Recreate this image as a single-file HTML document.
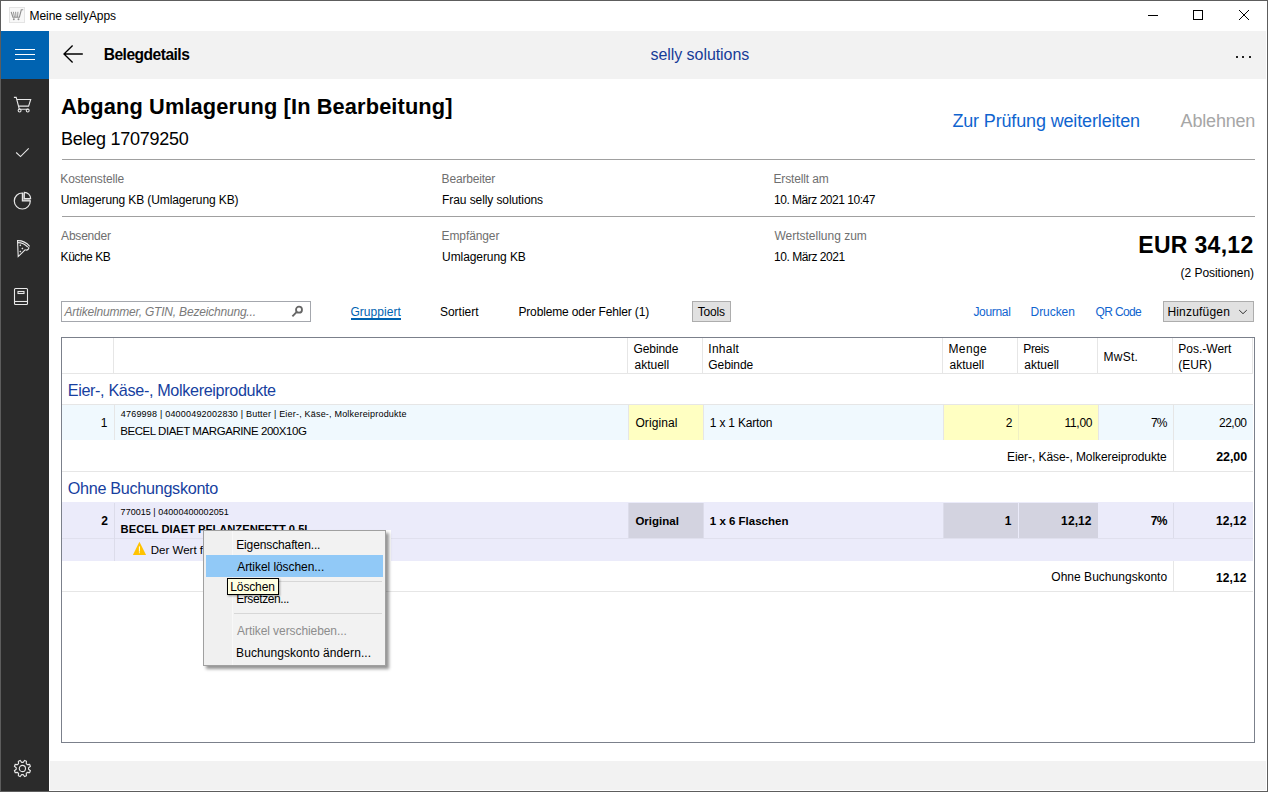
<!DOCTYPE html>
<html><head><meta charset="utf-8"><title>Belegdetails</title>
<style>
html,body{margin:0;padding:0;width:1268px;height:792px;overflow:hidden;background:#fff}
body{position:relative;font-family:"Liberation Sans",sans-serif;color:#000}
.t{position:absolute;white-space:nowrap}
.r{position:absolute}
</style></head><body>
<div class="r" style="left:0px;top:0px;width:1268px;height:792px;background:#5d5d5d;"></div>
<div class="r" style="left:1px;top:1px;width:1266px;height:790px;background:#ffffff;"></div>
<svg class="r" style="left:9px;top:7px" width="16" height="16" viewBox="0 0 16 16">
<rect x="0.5" y="0.5" width="15" height="15" fill="#f8f8f8" stroke="#e4e4e4"/>
<path d="M2.2 4.8 L3.9 10.2 H10.4 L12.3 2.8 H14.2" fill="none" stroke="#8e8e8e" stroke-width="1.1"/>
<path d="M4.4 4.8 L5.4 10 M6.6 4.8 L7 10 M8.9 4.8 L8.6 10" fill="none" stroke="#969696" stroke-width="1"/>
<circle cx="4.8" cy="12.3" r="0.95" fill="#8e8e8e"/><circle cx="9.5" cy="12.3" r="0.95" fill="#8e8e8e"/>
</svg>
<div class="t" style="top:10px;font-size:12px;line-height:12px;letter-spacing:-0.057px;left:29.50px;">Meine sellyApps</div>
<svg class="r" style="left:1140px;top:5px" width="120" height="22" viewBox="0 0 120 22">
<path d="M8 10.5 H18" stroke="#000" stroke-width="1" fill="none"/>
<rect x="53.5" y="5.5" width="9" height="9" stroke="#000" stroke-width="1" fill="none"/>
<path d="M99 5 L109 15 M109 5 L99 15" stroke="#000" stroke-width="1" fill="none"/>
</svg>
<div class="r" style="left:1px;top:31px;width:48px;height:760px;background:#2b2b2b;"></div>
<div class="r" style="left:1px;top:31px;width:48px;height:48px;background:#0063b1;"></div>
<div class="r" style="left:15px;top:49px;width:20px;height:1px;background:#fff;"></div>
<div class="r" style="left:15px;top:54px;width:20px;height:1px;background:#fff;"></div>
<div class="r" style="left:15px;top:59px;width:20px;height:1px;background:#fff;"></div>
<svg class="r" style="left:12px;top:94px" width="22" height="20" viewBox="0 0 22 20">
<path d="M1.9 3.4 H4.2 L7.3 15.2 H16.6" fill="none" stroke="#e8e8e8" stroke-width="1.1"/>
<path d="M4.9 5.5 H18.7 L16.6 12.1 H6.6" fill="none" stroke="#e8e8e8" stroke-width="1.1"/>
<circle cx="7.6" cy="16.5" r="1.45" fill="none" stroke="#e8e8e8" stroke-width="1.1"/><circle cx="15.7" cy="16.5" r="1.45" fill="none" stroke="#e8e8e8" stroke-width="1.1"/>
</svg>
<svg class="r" style="left:14px;top:145px" width="18" height="14" viewBox="0 0 18 14">
<path d="M2.2 7.5 L6.5 11.6 L14.7 3.4" fill="none" stroke="#e8e8e8" stroke-width="1.1"/>
</svg>
<svg class="r" style="left:8px;top:186px" width="30" height="30" viewBox="0 0 30 30">
<path d="M14.4 14.9 V7 H16.3 V12.6 H22.3 V14.9 Z" fill="#8f8f8f"/>
<path d="M14.4 7 A8 8 0 1 0 22.3 14.9 H14.4 Z" fill="none" stroke="#e6e6e6" stroke-width="1.2"/>
<path d="M16.3 6.3 A6.3 6.3 0 0 1 22.6 12.6 H16.3 Z" fill="none" stroke="#e6e6e6" stroke-width="1.2"/>
</svg>
<svg class="r" style="left:8px;top:234px" width="30" height="30" viewBox="0 0 30 30">
<path d="M9 6.6 Q16.5 6.2 21.7 12.3" fill="none" stroke="#e8e8e8" stroke-width="1.1"/>
<path d="M9.8 8.6 Q15.8 8.6 19.8 13.2" fill="none" stroke="#e8e8e8" stroke-width="1.1"/>
<path d="M9.5 6.6 L10.2 22.6 L17.3 15.6" fill="none" stroke="#e8e8e8" stroke-width="1.1"/>
<path d="M17.3 15.6 A2.2 2.2 0 0 0 20.6 12.9" fill="none" stroke="#e8e8e8" stroke-width="1.1"/>
<path d="M12.3 10.3 L13.3 11.3 L12.3 12.3 L11.3 11.3 Z M14.4 13.4 L15.4 14.4 L14.4 15.4 L13.4 14.4 Z M12.3 16.6 L13.3 17.6 L12.3 18.6 L11.3 17.6 Z" fill="#e6e6e6"/>
</svg>
<svg class="r" style="left:12px;top:286px" width="18" height="20" viewBox="0 0 18 20">
<rect x="2.5" y="2.5" width="13" height="16" rx="1" fill="none" stroke="#e8e8e8" stroke-width="1.1"/>
<path d="M2.5 15.5 H15.5" fill="none" stroke="#e8e8e8" stroke-width="1.1"/>
<rect x="6" y="5.5" width="6" height="2" fill="none" stroke="#e8e8e8" stroke-width="1.1"/>
</svg>
<svg class="r" style="left:12px;top:758px" width="22" height="22" viewBox="0 0 22 22">
<path d="M11.13 4.34 L12.65 2.51 L14.46 3.26 L14.24 5.63 L15.27 6.66 L17.64 6.44 L18.39 8.25 L16.56 9.77 L16.56 11.23 L18.39 12.75 L17.64 14.56 L15.27 14.34 L14.24 15.37 L14.46 17.74 L12.65 18.49 L11.13 16.66 L9.67 16.66 L8.15 18.49 L6.34 17.74 L6.56 15.37 L5.53 14.34 L3.16 14.56 L2.41 12.75 L4.24 11.23 L4.24 9.77 L2.41 8.25 L3.16 6.44 L5.53 6.66 L6.56 5.63 L6.34 3.26 L8.15 2.51 L9.67 4.34 Z" fill="none" stroke="#e8e8e8" stroke-width="1.1"/>
<circle cx="10.4" cy="10.5" r="3.1" fill="none" stroke="#e8e8e8" stroke-width="1.1"/>
</svg>
<div class="r" style="left:49px;top:31px;width:1217px;height:48px;background:#f2f2f2;"></div>
<svg class="r" style="left:60px;top:43px" width="26" height="22" viewBox="0 0 26 22">
<path d="M12.6 2.4 L4 11 L12.6 19.6 M4 11 H22.8" fill="none" stroke="#000" stroke-width="1.35"/>
</svg>
<div class="t" style="top:47px;font-size:15.6px;line-height:15.6px;font-weight:bold;letter-spacing:-0.518px;left:103.70px;">Belegdetails</div>
<div class="t" style="top:47px;font-size:16px;line-height:16px;color:#173c98;letter-spacing:-0.057px;left:650.50px;">selly solutions</div>
<div class="r" style="left:1236px;top:56px;width:2px;height:2px;background:#222;"></div>
<div class="r" style="left:1242px;top:56px;width:2px;height:2px;background:#222;"></div>
<div class="r" style="left:1249px;top:56px;width:2px;height:2px;background:#222;"></div>
<div class="r" style="left:50px;top:761px;width:1216px;height:29px;background:#f2f2f2;"></div>
<div class="t" style="top:96px;font-size:21.8px;line-height:21.8px;font-weight:bold;letter-spacing:0.121px;left:61.00px;">Abgang Umlagerung [In Bearbeitung]</div>
<div class="t" style="top:130px;font-size:18px;line-height:18px;letter-spacing:-0.254px;left:61.00px;">Beleg 17079250</div>
<div class="r" style="left:62px;top:159px;width:1193px;height:1px;background:#a0a0a0;"></div>
<div class="t" style="top:112px;font-size:18px;line-height:18px;color:#0f64cf;letter-spacing:-0.148px;left:952.40px;">Zur Prüfung weiterleiten</div>
<div class="t" style="top:112px;font-size:18px;line-height:18px;color:#a6a6a6;letter-spacing:-0.186px;left:1180.60px;">Ablehnen</div>
<div class="t" style="top:173px;font-size:12px;line-height:12px;color:#6f6f6f;letter-spacing:-0.136px;left:60.30px;">Kostenstelle</div>
<div class="t" style="top:194px;font-size:12px;line-height:12px;letter-spacing:-0.107px;left:60.80px;">Umlagerung KB (Umlagerung KB)</div>
<div class="t" style="top:173px;font-size:12px;line-height:12px;color:#6f6f6f;letter-spacing:-0.189px;left:441.60px;">Bearbeiter</div>
<div class="t" style="top:194px;font-size:12px;line-height:12px;letter-spacing:-0.089px;left:442.10px;">Frau selly solutions</div>
<div class="t" style="top:173px;font-size:12px;line-height:12px;color:#6f6f6f;letter-spacing:-0.140px;left:773.50px;">Erstellt am</div>
<div class="t" style="top:194px;font-size:12px;line-height:12px;letter-spacing:-0.483px;left:774.00px;">10. März 2021 10:47</div>
<div class="r" style="left:62px;top:216px;width:1193px;height:1px;background:#a0a0a0;"></div>
<div class="t" style="top:230px;font-size:12px;line-height:12px;color:#6f6f6f;letter-spacing:-0.214px;left:61.10px;">Absender</div>
<div class="t" style="top:251px;font-size:12px;line-height:12px;letter-spacing:-0.457px;left:60.60px;">Küche KB</div>
<div class="t" style="top:230px;font-size:12px;line-height:12px;color:#6f6f6f;letter-spacing:-0.112px;left:441.60px;">Empfänger</div>
<div class="t" style="top:251px;font-size:12px;line-height:12px;letter-spacing:-0.083px;left:442.10px;">Umlagerung KB</div>
<div class="t" style="top:230px;font-size:12px;line-height:12px;color:#6f6f6f;letter-spacing:-0.013px;left:774.50px;">Wertstellung zum</div>
<div class="t" style="top:251px;font-size:12px;line-height:12px;letter-spacing:-0.467px;left:774.00px;">10. März 2021</div>
<div class="t" style="top:234px;font-size:23px;line-height:23px;font-weight:bold;letter-spacing:0.300px;right:14.48px;">EUR 34,12</div>
<div class="t" style="top:267px;font-size:12px;line-height:12px;letter-spacing:-0.046px;right:14.00px;">(2 Positionen)</div>
<div class="r" style="left:61px;top:301px;width:250px;height:21px;background:#fff;box-sizing:border-box;border:1px solid #a4a7ad;"></div>
<div class="t" style="top:306px;font-size:12px;line-height:12px;color:#7a7a7a;font-style:italic;letter-spacing:-0.194px;left:64.50px;">Artikelnummer, GTIN, Bezeichnung...</div>
<svg class="r" style="left:289px;top:304px" width="16" height="16" viewBox="0 0 16 16">
<circle cx="10" cy="5.7" r="3.0" fill="none" stroke="#666" stroke-width="1.8"/>
<path d="M7.8 7.9 L3.4 12.4" stroke="#666" stroke-width="1.9"/>
</svg>
<div class="t" style="top:306px;font-size:12px;line-height:12px;color:#0063b1;letter-spacing:0.050px;left:350.40px;">Gruppiert</div>
<div class="r" style="left:351px;top:318px;width:50px;height:2px;background:#0063b1;"></div>
<div class="t" style="top:306px;font-size:12px;line-height:12px;letter-spacing:-0.029px;left:440.00px;">Sortiert</div>
<div class="t" style="top:306px;font-size:12px;line-height:12px;letter-spacing:-0.139px;left:518.40px;">Probleme oder Fehler (1)</div>
<div class="r" style="left:692px;top:301px;width:39px;height:21px;background:#e1e1e1;box-sizing:border-box;border:1px solid #adadad;"></div>
<div class="t" style="top:306px;font-size:12px;line-height:12px;letter-spacing:-0.175px;left:697.70px;">Tools</div>
<div class="t" style="top:306px;font-size:12px;line-height:12px;color:#0f64cf;letter-spacing:-0.317px;left:973.40px;">Journal</div>
<div class="t" style="top:306px;font-size:12px;line-height:12px;color:#0f64cf;letter-spacing:-0.067px;left:1030.60px;">Drucken</div>
<div class="t" style="top:306px;font-size:12px;line-height:12px;color:#0f64cf;letter-spacing:-0.633px;left:1095.50px;">QR Code</div>
<div class="r" style="left:1163px;top:301px;width:91px;height:21px;background:#e1e1e1;box-sizing:border-box;border:1px solid #adadad;"></div>
<div class="t" style="top:306px;font-size:12px;line-height:12px;letter-spacing:0.189px;left:1167.40px;">Hinzufügen</div>
<svg class="r" style="left:1238px;top:308px" width="10" height="8" viewBox="0 0 10 8">
<path d="M1.2 2.1 L5 5.7 L8.8 2.1" fill="none" stroke="#2a2a2a" stroke-width="0.95"/>
</svg>
<div class="r" style="left:61px;top:337px;width:1194px;height:406px;background:#fff;box-sizing:border-box;border:1px solid #7b808b;"></div>
<div class="r" style="left:62px;top:373px;width:1191px;height:1px;background:#e6e6e6;"></div>
<div class="r" style="left:113px;top:338px;width:1px;height:35px;background:#e6e6e6;"></div>
<div class="r" style="left:627px;top:338px;width:1px;height:35px;background:#e6e6e6;"></div>
<div class="r" style="left:702px;top:338px;width:1px;height:35px;background:#e6e6e6;"></div>
<div class="r" style="left:942px;top:338px;width:1px;height:35px;background:#e6e6e6;"></div>
<div class="r" style="left:1017px;top:338px;width:1px;height:35px;background:#e6e6e6;"></div>
<div class="r" style="left:1097px;top:338px;width:1px;height:35px;background:#e6e6e6;"></div>
<div class="r" style="left:1172px;top:338px;width:1px;height:35px;background:#e6e6e6;"></div>
<div class="r" style="left:1252px;top:338px;width:1px;height:35px;background:#e6e6e6;"></div>
<div class="t" style="top:343px;font-size:12px;line-height:12px;letter-spacing:-0.083px;left:633.50px;">Gebinde</div>
<div class="t" style="top:359px;font-size:12px;line-height:12px;left:634.50px;">aktuell</div>
<div class="t" style="top:343px;font-size:12px;line-height:12px;letter-spacing:0.260px;left:708.30px;">Inhalt</div>
<div class="t" style="top:359px;font-size:12px;line-height:12px;letter-spacing:-0.083px;left:708.30px;">Gebinde</div>
<div class="t" style="top:343px;font-size:12px;line-height:12px;letter-spacing:0.375px;left:948.50px;">Menge</div>
<div class="t" style="top:359px;font-size:12px;line-height:12px;left:949.50px;">aktuell</div>
<div class="t" style="top:343px;font-size:12px;line-height:12px;letter-spacing:-0.375px;left:1023.30px;">Preis</div>
<div class="t" style="top:359px;font-size:12px;line-height:12px;left:1024.30px;">aktuell</div>
<div class="t" style="top:343px;font-size:12px;line-height:12px;left:1178.30px;">Pos.-Wert</div>
<div class="t" style="top:359px;font-size:12px;line-height:12px;left:1178.30px;">(EUR)</div>
<div class="t" style="top:351px;font-size:12px;line-height:12px;letter-spacing:0.250px;left:1103.60px;">MwSt.</div>
<div class="t" style="top:382px;font-size:16.2px;line-height:16.2px;color:#173fa0;letter-spacing:-0.352px;left:67.70px;">Eier-, Käse-, Molkereiprodukte</div>
<div class="r" style="left:62px;top:404px;width:1191px;height:1px;background:#e6e6e6;"></div>
<div class="r" style="left:62px;top:405px;width:1191px;height:35px;background:#f0f9fe;"></div>
<div class="r" style="left:114px;top:405px;width:1px;height:35px;background:#e6e6e6;"></div>
<div class="r" style="left:628px;top:405px;width:1px;height:35px;background:#e6e6e6;"></div>
<div class="r" style="left:943px;top:405px;width:1px;height:35px;background:#e6e6e6;"></div>
<div class="r" style="left:703px;top:405px;width:1px;height:35px;background:#e6e6e6;"></div>
<div class="r" style="left:1098px;top:405px;width:1px;height:35px;background:#e6e6e6;"></div>
<div class="r" style="left:629px;top:405px;width:74px;height:35px;background:#ffffc2;"></div>
<div class="r" style="left:944px;top:405px;width:154px;height:35px;background:#ffffc2;"></div>
<div class="r" style="left:1018px;top:405px;width:1px;height:35px;background:#f0f0c4;"></div>
<div class="r" style="left:1173px;top:405px;width:1px;height:35px;background:#e6e6e6;"></div>
<div class="t" style="top:417px;font-size:12px;line-height:12px;right:1160.51px;">1</div>
<div class="t" style="top:410px;font-size:9px;line-height:9px;letter-spacing:0.200px;left:120.80px;">4769998 | 04000492002830 | Butter | Eier-, Käse-, Molkereiprodukte</div>
<div class="t" style="top:426px;font-size:11.5px;line-height:11.5px;letter-spacing:-0.429px;left:120.20px;">BECEL DIAET MARGARINE 200X10G</div>
<div class="t" style="top:417px;font-size:12px;line-height:12px;letter-spacing:0.086px;left:635.40px;">Original</div>
<div class="t" style="top:417px;font-size:12px;line-height:12px;letter-spacing:-0.200px;left:709.80px;">1 x 1 Karton</div>
<div class="t" style="top:417px;font-size:12px;line-height:12px;right:255.51px;">2</div>
<div class="t" style="top:417px;font-size:12px;line-height:12px;letter-spacing:-0.300px;right:175.86px;">11,00</div>
<div class="t" style="top:417px;font-size:12px;line-height:12px;letter-spacing:-1.000px;right:101.66px;">7%</div>
<div class="t" style="top:417px;font-size:12px;line-height:12px;letter-spacing:-0.550px;right:21.62px;">22,00</div>
<div class="r" style="left:1173px;top:440px;width:1px;height:31px;background:#e6e6e6;"></div>
<div class="t" style="top:451px;font-size:12px;line-height:12px;letter-spacing:-0.079px;right:101.30px;">Eier-, Käse-, Molkereiprodukte</div>
<div class="t" style="top:451px;font-size:12.5px;line-height:12.5px;font-weight:bold;letter-spacing:-0.075px;right:20.89px;">22,00</div>
<div class="r" style="left:62px;top:471px;width:1191px;height:1px;background:#e6e6e6;"></div>
<div class="t" style="top:480px;font-size:16.2px;line-height:16.2px;color:#173fa0;letter-spacing:-0.300px;left:67.70px;">Ohne Buchungskonto</div>
<div class="r" style="left:62px;top:502px;width:1191px;height:59px;background:#ebebfa;"></div>
<div class="r" style="left:62px;top:538px;width:1191px;height:1px;background:#e0e0ee;"></div>
<div class="r" style="left:114px;top:503px;width:1px;height:58px;background:#dcdcea;"></div>
<div class="r" style="left:628px;top:503px;width:1px;height:35px;background:#dcdcea;"></div>
<div class="r" style="left:703px;top:503px;width:1px;height:35px;background:#dcdcea;"></div>
<div class="r" style="left:943px;top:503px;width:1px;height:35px;background:#dcdcea;"></div>
<div class="r" style="left:629px;top:503px;width:74px;height:35px;background:#d3d3e0;"></div>
<div class="r" style="left:944px;top:503px;width:154px;height:35px;background:#d3d3e0;"></div>
<div class="r" style="left:1018px;top:503px;width:1px;height:35px;background:#ebebfa;"></div>
<div class="r" style="left:1173px;top:503px;width:1px;height:35px;background:#dcdcea;"></div>
<div class="t" style="top:515px;font-size:12px;line-height:12px;font-weight:bold;right:1160.01px;">2</div>
<div class="t" style="top:508px;font-size:9px;line-height:9px;letter-spacing:0.032px;left:120.60px;">770015 | 04000400002051</div>
<div class="t" style="top:524px;font-size:11.2px;line-height:11.2px;font-weight:bold;left:120.60px;">BECEL DIAET PFLANZENFETT 0,5L</div>
<div class="t" style="top:516px;font-size:11.5px;line-height:11.5px;font-weight:bold;left:635.40px;">Original</div>
<div class="t" style="top:516px;font-size:11.5px;line-height:11.5px;font-weight:bold;left:709.80px;">1 x 6 Flaschen</div>
<div class="t" style="top:515px;font-size:12px;line-height:12px;font-weight:bold;right:256.51px;">1</div>
<div class="t" style="top:515px;font-size:12px;line-height:12px;font-weight:bold;letter-spacing:0.100px;right:176.37px;">12,12</div>
<div class="t" style="top:515px;font-size:12px;line-height:12px;font-weight:bold;letter-spacing:-0.700px;right:101.36px;">7%</div>
<div class="t" style="top:515px;font-size:12px;line-height:12px;font-weight:bold;letter-spacing:0.100px;right:21.47px;">12,12</div>
<svg class="r" style="left:132px;top:541px" width="16" height="15" viewBox="0 0 16 15">
<path d="M7.4 0.8 L14.1 13.9 H0.9 Z" fill="#ffc300"/>
<rect x="6.9" y="5.4" width="1.1" height="5.2" fill="#fff8e0"/>
<rect x="6.9" y="11.2" width="1.1" height="1.0" fill="#fff0c0"/>
</svg>
<div class="t" style="top:545px;font-size:11.5px;line-height:11.5px;left:150.80px;">Der Wert für die Menge ist ungültig</div>
<div class="r" style="left:1173px;top:561px;width:1px;height:30px;background:#e6e6e6;"></div>
<div class="t" style="top:571px;font-size:12px;line-height:12px;letter-spacing:0.024px;right:100.85px;">Ohne Buchungskonto</div>
<div class="t" style="top:572px;font-size:12px;line-height:12px;font-weight:bold;letter-spacing:0.100px;right:21.47px;">12,12</div>
<div class="r" style="left:62px;top:591px;width:1191px;height:1px;background:#e6e6e6;"></div>
<div class="r" style="left:386px;top:530px;width:5px;height:31px;background:#ffffff;"></div>
<div class="r" style="left:203px;top:530px;width:183px;height:136px;background:#f0f0f0;box-sizing:border-box;border:1px solid #a0a0a0;box-shadow:3px 3px 3px rgba(0,0,0,0.42);"></div>
<div class="r" style="left:232px;top:531px;width:1px;height:134px;background:#f8f8f8;"></div>
<div class="r" style="left:233px;top:531px;width:152px;height:134px;background:#f2f2f2;"></div>
<div class="r" style="left:206px;top:555px;width:177px;height:22px;background:#91c9f7;"></div>
<div class="r" style="left:234px;top:581px;width:148px;height:1px;background:#d7d7d7;"></div>
<div class="r" style="left:234px;top:613px;width:148px;height:1px;background:#d7d7d7;"></div>
<div class="t" style="top:539px;font-size:12px;line-height:12px;letter-spacing:-0.120px;left:236.20px;">Eigenschaften...</div>
<div class="t" style="top:561px;font-size:12px;line-height:12px;letter-spacing:-0.059px;left:237.20px;">Artikel löschen...</div>
<div class="t" style="top:593px;font-size:12px;line-height:12px;letter-spacing:-0.410px;left:236.20px;">Ersetzen...</div>
<div class="t" style="top:625px;font-size:12px;line-height:12px;color:#8d8d8d;letter-spacing:-0.081px;left:237.10px;">Artikel verschieben...</div>
<div class="t" style="top:647px;font-size:12px;line-height:12px;letter-spacing:0.068px;left:236.10px;">Buchungskonto ändern...</div>
<div class="r" style="left:227px;top:578px;width:52px;height:17px;background:#ffffe1;box-sizing:border-box;border:1px solid #000;box-shadow:1px 1px 2px rgba(0,0,0,0.35);"></div>
<div class="t" style="top:581px;font-size:12px;line-height:12px;letter-spacing:-0.133px;left:230.30px;">Löschen</div>
</body></html>
